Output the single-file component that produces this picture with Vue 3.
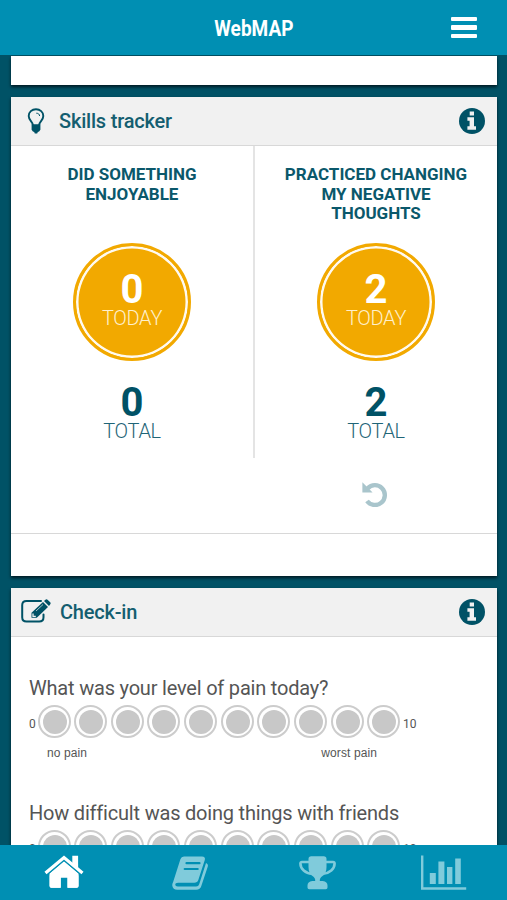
<template>
	<div class="app">
		<header class="top-bar">
			<h1 class="brand">WebMAP</h1>
			<div class="menu-btn"><i></i><i></i><i></i></div>
		</header>

		<main class="content">
			<section class="card card-prev"></section>

			<section class="card card-skills">
				<div class="card-head">
					<svg class="head-icon bulb" viewBox="0 0 18 26">
						<path d="M6 17.5C6 13.5 1.7 12.5 1.7 8C1.7 4 4.9 1.3 9 1.3S16.3 4 16.3 8C16.3 12.5 12 13.5 12 17.5" fill="none" stroke="currentColor" stroke-width="1.9" />
						<path d="M9.3 5.2c2 0 3.2 1 3.3 2.8" fill="none" stroke="currentColor" stroke-width="1" />
						<path d="M4.6 16.2h8.8v5.5l-1.3 1.8-1.3.5-.6 1.5H7.8L7.2 24l-1.3-.5-1.3-1.8z" fill="currentColor" />
					</svg>
					<span class="head-title skills-title">Skills tracker</span>
					<svg class="info" viewBox="0 0 26 26">
						<circle cx="13" cy="13" r="13" fill="currentColor" />
						<path d="M10.7 3.5h4.3v4h-4.3zM8.4 9.3H15v9h2v3.4H8.4v-3.4h2.2v-5.6H8.4z" fill="#f1f1f1" />
					</svg>
				</div>
				<div class="skills">
					<div v-for="item in skills" :key="item.name" class="skill">
						<div class="skill-name">
							<span v-for="line in item.lines" :key="line">{{ line }}</span>
						</div>
						<div class="today">
							<div class="num">{{ item.today }}</div>
							<div class="label">TODAY</div>
						</div>
						<div class="total">
							<div class="num">{{ item.total }}</div>
							<div class="label">TOTAL</div>
						</div>
					</div>
				</div>
				<div class="undo-row">
					<svg class="undo" viewBox="0 0 26 26">
						<path d="M5.6 7.4A9.9 9.9 0 1 1 5 20" fill="none" stroke="currentColor" stroke-width="4.4" />
						<path d="M.4 1.2v10.2h10.2z" fill="currentColor" />
					</svg>
				</div>
			</section>

			<section class="card card-check">
				<div class="card-head">
					<svg class="head-icon edit" viewBox="0 0 30 24">
						<path d="M20 2H5.5Q1.2 2 1.2 6.3v11.9q0 4.3 4.3 4.3h12.7q4.3 0 4.3-4.3v-2.7" fill="none" stroke="currentColor" stroke-width="2" stroke-linecap="round" />
						<path d="M10.5 13.7 22 3l5 5-11.2 10.8h-5.3z" fill="currentColor" />
						<path d="M23 2.1 24.4.8q1.2-1 2.4.1L29.2 3.3q1 1.1-.1 2.3L28 6.9z" fill="currentColor" />
						<path d="m15 12 7-6.5" stroke="#a6c2c8" stroke-width="1" />
						<path d="M12 14.5v2.8h2.8" fill="none" stroke="#f1f1f1" stroke-width="1.3" />
					</svg>
					<span class="head-title check-title">Check-in</span>
					<svg class="info" viewBox="0 0 26 26">
						<circle cx="13" cy="13" r="13" fill="currentColor" />
						<path d="M10.7 3.5h4.3v4h-4.3zM8.4 9.3H15v9h2v3.4H8.4v-3.4h2.2v-5.6H8.4z" fill="#f1f1f1" />
					</svg>
				</div>
				<div class="questions">
					<div v-for="q in questions" :key="q.text" class="question">
						<div class="q-text">{{ q.text }}</div>
						<div class="scale">
							<span class="min">0</span>
							<span v-for="n in 10" :key="n" class="dot"></span>
							<span class="max">10</span>
						</div>
						<div v-if="q.low" class="hints">
							<span>{{ q.low }}</span>
							<span>{{ q.high }}</span>
						</div>
					</div>
				</div>
			</section>
		</main>

		<nav class="tabs">
			<div class="tab active">
				<svg class="home" viewBox="0 0 40 33">
					<path d="M20 6.2 34.6 18.5V31q0 1.7-1.7 1.7h-9.4V22.5h-6.8v10.2H7.2q-1.7 0-1.7-1.7V18.5z" fill="currentColor" />
					<path d="M1.3 18 20 2.3 38.7 18" fill="none" stroke="#008fb3" stroke-width="6" />
					<path d="M20 8.6 34.4 20.5V31q0 1.7-1.7 1.7h-9.2V22.5h-6.8v10.2H7.4q-1.7 0-1.7-1.7V20.5z" fill="currentColor" />
					<path d="M28.3.8h5.8v13l-5.8-4.9z" fill="currentColor" />
					<path d="M1.5 18 20 2.5 38.5 18" fill="none" stroke="currentColor" stroke-width="3.2" />
				</svg>
			</div>
			<div class="tab">
				<svg class="book" viewBox="0 0 37 34">
					<path d="M12 .5h18q3.7 0 2.8 3.5L26.3 24q-.9 2.8-4 2.8H6q-2.8 0-2.8 1.5 0 2.2 2.5 2.2h18.4q2.4 0 3.1-2.3L34 7.1q2.5 1.1 1.8 3.4L29.3 30q-1.2 3.8-5 3.8H5.1Q1 33.8.3 29.7q-.2-2 1-4.3L8.4 3.2Q9.3.5 12 .5z" fill="currentColor" />
					<path d="M14.5 7.2h13M12.7 13h13" stroke="#008fb3" stroke-width="2.2" stroke-linecap="round" />
				</svg>
			</div>
			<div class="tab">
				<svg class="trophy" viewBox="0 0 37 34">
					<path d="M9.5 3q0-2.8 2.8-2.8h12.4q2.8 0 2.8 2.8v8q0 6.5-4 9-3 2-2.7 5h2.9q4.8.6 4.8 4.5v2q0 1.7-1.7 1.7H10.2q-1.7 0-1.7-1.7v-2q0-3.9 4.8-4.5h2.9q.3-3-2.7-5-4-2.5-4-9z" fill="currentColor" />
					<path d="M10 6H3Q1.4 6 1.4 7.6C1.4 13 6.5 17.4 12.8 17.7M27 6h7q1.6 0 1.6 1.6c0 5.4-5.1 9.8-11.4 10.1" fill="none" stroke="currentColor" stroke-width="2.6" />
				</svg>
			</div>
			<div class="tab">
				<svg class="chart" viewBox="0 0 46 35">
					<path d="M1.2.5v33h44" fill="none" stroke="currentColor" stroke-width="2.4" />
					<path d="M8.8 18h6v11h-6zM17.4 6.5h6V29h-6zM26 12h5.4v17H26zM34.2 3.5h5.6V29h-5.6z" fill="currentColor" />
				</svg>
			</div>
		</nav>
	</div>
</template>

<script setup>
import { reactive } from 'vue';

const skills = reactive([
	{ name: 'enjoyable', lines: ['DID SOMETHING', 'ENJOYABLE'], today: 0, total: 0 },
	{ name: 'thoughts', lines: ['PRACTICED CHANGING', 'MY NEGATIVE', 'THOUGHTS'], today: 2, total: 2 },
]);

const questions = reactive([
	{ text: 'What was your level of pain today?', low: 'no pain', high: 'worst pain' },
	{ text: 'How difficult was doing things with friends' },
]);
</script>

<style>
body {
	margin: 0;
	background: #005266;
}
</style>

<style scoped>
.app {
	height: 900px;
	display: flex;
	flex-direction: column;
	overflow: hidden;
	background: #005266;
	color: #005266;
	font-family: Roboto, sans-serif;
}
.app * {
	box-sizing: border-box;
}
.top-bar {
	flex: none;
	height: 55px;
	display: grid;
	grid-template-columns: 1fr auto 1fr;
	align-items: center;
	background: #008fb3;
	color: #fff;
}
.brand {
	grid-column: 2;
	margin: 0;
	font-size: 22.5px;
	font-weight: 700;
	line-height: 26px;
	transform: scaleX(0.845);
}
.menu-btn {
	justify-self: end;
	width: 26px;
	margin-right: 30px;
	display: grid;
	gap: 4px;
}
.menu-btn i {
	height: 4.5px;
	border-radius: 1px;
	background: #fff;
}
.content {
	flex: 1;
	min-height: 0;
	overflow: hidden;
	padding: 1px 10px 0 11px;
}
.card {
	background: #fff;
	box-shadow: 0 2px 3px #001a22;
}
.card-prev {
	height: 29px;
}
.card-skills {
	height: 479px;
	margin-top: 12px;
}
.card-check {
	height: 400px;
	margin-top: 12px;
}
.card-head {
	height: 49px;
	display: flex;
	align-items: center;
	background: #f1f1f1;
	border-bottom: 1px solid #d8d8d8;
}
.head-icon {
	flex: none;
}
.bulb {
	width: 18px;
	height: 26px;
	margin: 0 14px 0 16px;
}
.edit {
	width: 30px;
	height: 24px;
	margin: 0 9px 2px 10px;
}
.head-title {
	font-size: 20px;
	font-weight: 500;
	line-height: 24px;
	letter-spacing: -0.2px;
	color: #145e70;
}
.skills-title {
	margin-bottom: 1px;
}
.check-title {
	margin-bottom: 1px;
}
.info {
	width: 26px;
	height: 26px;
	margin: 0 12px 0 auto;
}
.skills {
	height: 312px;
	display: grid;
	grid-template-columns: 244px 1fr;
}
.skill {
	display: flex;
	flex-direction: column;
	align-items: center;
	padding-top: 19px;
}
.skill:first-child {
	border-right: 2px solid #e4e4e4;
}
.skill-name {
	height: 78px;
	display: flex;
	flex-direction: column;
	align-items: center;
	font-size: 17px;
	font-weight: 700;
	line-height: 19.5px;
	white-space: nowrap;
	color: #0a586b;
}
.today {
	width: 118px;
	height: 118px;
	border: 3px solid #f2a900;
	border-radius: 50%;
	padding: 23px 0 0;
	text-align: center;
	background: #f2a900;
	color: #fff;
	box-shadow: inset 0 0 0 2.5px #fffaf0;
}
.num {
	font-size: 40px;
	font-weight: 700;
	line-height: 40px;
}
.label {
	font-size: 20px;
	font-weight: 300;
	line-height: 20px;
	letter-spacing: -0.3px;
}
.today .num,
.total .num {
	padding-top: 1px;
}
.today .label {
	margin-top: -2px;
	color: #fff0cc;
}
.total {
	padding-top: 21px;
	text-align: center;
}
.total .label {
	margin-top: -2px;
	color: #1f6577;
}
.undo-row {
	height: 76px;
	display: flex;
	justify-content: flex-end;
	border-bottom: 1px solid #d8d8d8;
}
.undo {
	width: 26px;
	height: 26px;
	margin: 23px 109px 0 0;
	color: #a9c5cc;
}
.questions {
	padding: 39px 0 0 18px;
}
.question {
	height: 125px;
	color: #555;
}
.q-text {
	font-size: 20px;
	line-height: 24px;
	letter-spacing: -0.2px;
	white-space: nowrap;
}
.scale {
	display: flex;
	align-items: center;
	height: 33px;
	margin-top: 5px;
	gap: 3.65px;
	font-size: 12px;
}
.min {
	width: 8px;
	margin-right: -3.15px;
	padding-top: 4px;
}
.max {
	padding-top: 4px;
	margin-left: -1px;
}
.dot {
	width: 33px;
	height: 33px;
	border: 2px solid #ccc;
	border-radius: 50%;
	padding: 2.5px;
	background: #c8c8c8 content-box;
}
.hints {
	width: 348px;
	margin: 8px 0 0 18px;
	display: flex;
	justify-content: space-between;
	padding-right: 18px;
	font: 12px/14px "Liberation Sans", Arial, sans-serif;
	letter-spacing: 0.1px;
}
.tabs {
	flex: none;
	height: 55px;
	display: grid;
	grid-template-columns: repeat(4, 1fr);
	padding-left: 1px;
	background: #008fb3;
}
.tab {
	display: flex;
	justify-content: center;
	align-items: center;
	color: #80cbdb;
}
.tab.active {
	color: #fff;
}
.home {
	width: 40px;
	height: 33px;
	margin-top: -2px;
}
.book,
.trophy {
	width: 37px;
	height: 34px;
}
.chart {
	width: 46px;
	height: 35px;
	margin-top: -1px;
}
</style>
